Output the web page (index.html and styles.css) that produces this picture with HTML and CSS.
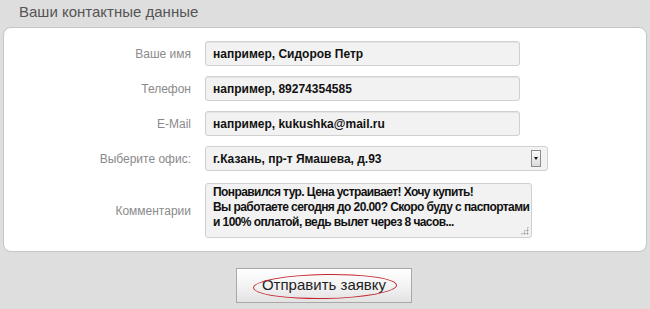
FILE: index.html
```html
<!DOCTYPE html>
<html lang="ru">
<head>
<meta charset="utf-8">
<title>Ваши контактные данные</title>
<link rel="stylesheet" href="styles.css">
</head>
<body>
<div class="page">
  <h2 class="title">Ваши контактные данные</h2>
  <form class="panel">
    <label class="lbl" for="f-name">Ваше имя</label>
    <input class="field" id="f-name" type="text" value="например, Сидоров Петр">
    <label class="lbl" for="f-phone">Телефон</label>
    <input class="field" id="f-phone" type="text" value="например, 89274354585">
    <label class="lbl" for="f-mail">E-Mail</label>
    <input class="field" id="f-mail" type="text" value="например, kukushka@mail.ru">
    <label class="lbl">Выберите офис:</label>
    <div class="select">
      <span class="select-text">г.Казань, пр-т Ямашева, д.93</span>
      <span class="select-btn"><span class="tri"></span></span>
    </div>
    <label class="lbl lbl-area" for="f-comm">Комментарии</label>
    <div class="area" id="f-comm">Понравился тур. Цена устраивает! Хочу купить!<br>Вы работаете сегодня до 20.00? Скоро буду с паспортами<br>и 100% оплатой, ведь вылет через 8 часов...<span class="grip"></span></div>
  </form>
  <div class="actions">
    <button class="submit" type="button">Отправить заявку<span class="ring"></span></button>
  </div>
</div>
</body>
</html>
```
FILE: styles.css
```css
* { box-sizing: border-box; }
html, body { margin: 0; padding: 0; }
body {
  background: #dedede;
  font-family: "Liberation Sans", Arial, sans-serif;
  width: 650px;
  height: 309px;
  overflow: hidden;
}
.title {
  margin: 0;
  height: 27px;
  padding: 3px 0 0 19px;
  font-size: 15px;
  font-weight: normal;
  color: #555;
  line-height: 18px;
}
.panel {
  margin: 0 3px;
  background: #fff;
  border: 1px solid #c6c6c6;
  border-radius: 8px;
  height: 225px;
  padding: 13px 0 0 0;
  display: grid;
  grid-template-columns: 187px auto;
  column-gap: 14px;
  row-gap: 10px;
  align-content: start;
  align-items: center;
  justify-items: start;
}
.lbl {
  justify-self: end;
  font-size: 12px;
  color: #8a8a8a;
}
.field {
  width: 315px;
  height: 25px;
  border: 1px solid #d0d0d0;
  border-radius: 3px;
  background: #f2f2f2;
  box-shadow: inset 0 1px 1px rgba(0,0,0,0.06);
  padding: 0 7px;
  font-family: "Liberation Sans", Arial, sans-serif;
  font-weight: bold;
  font-size: 12px;
  color: #111;
  outline: none;
}
.select {
  width: 343px;
  height: 25px;
  border: 1px solid #d0d0d0;
  border-radius: 3px;
  background: #f2f2f2;
  display: flex;
  align-items: center;
  justify-content: space-between;
  padding: 0 6px 0 7px;
  font-weight: bold;
  font-size: 12px;
  color: #111;
}
.select-btn {
  width: 10px;
  height: 17px;
  border: 1px solid #8c8c8c;
  background: linear-gradient(#fafafa, #dcdcdc);
  display: flex;
  align-items: center;
  justify-content: center;
}
.tri {
  width: 0;
  height: 0;
  border-left: 2.5px solid transparent;
  border-right: 2.5px solid transparent;
  border-top: 3px solid #111;
}
.lbl-area { margin-top: 2px; }
.area {
  position: relative;
  margin-top: 2px;
  width: 327px;
  height: 55px;
  border: 1px solid #d0d0d0;
  border-radius: 3px;
  background: #f2f2f2;
  padding: 1px 4px 0 7px;
  font-weight: bold;
  font-size: 12px;
  line-height: 15px;
  letter-spacing: -0.58px;
  color: #111;
  white-space: nowrap;
}
.grip {
  position: absolute;
  right: 2px;
  bottom: 2px;
  width: 9px;
  height: 9px;
  background:
    radial-gradient(circle, #999 0.8px, transparent 1.2px) 0 0 / 3px 3px;
  clip-path: polygon(100% 0, 100% 100%, 0 100%);
}
.actions {
  display: flex;
  justify-content: center;
  padding-top: 16px;
  padding-right: 2px;
}
.submit {
  position: relative;
  width: 176px;
  height: 35px;
  border: 1px solid #a9a9a9;
  background: linear-gradient(#ffffff, #f3f3f3 50%, #e3e3e3);
  font-family: "Liberation Sans", Arial, sans-serif;
  font-size: 15px;
  color: #222;
  padding: 0 0 2px 0;
}
.ring {
  position: absolute;
  left: 16px;
  top: 5px;
  width: 144px;
  height: 25px;
  border: 1.5px solid #c4262e;
  border-radius: 50%;
  transform: rotate(-1deg);
}
```
